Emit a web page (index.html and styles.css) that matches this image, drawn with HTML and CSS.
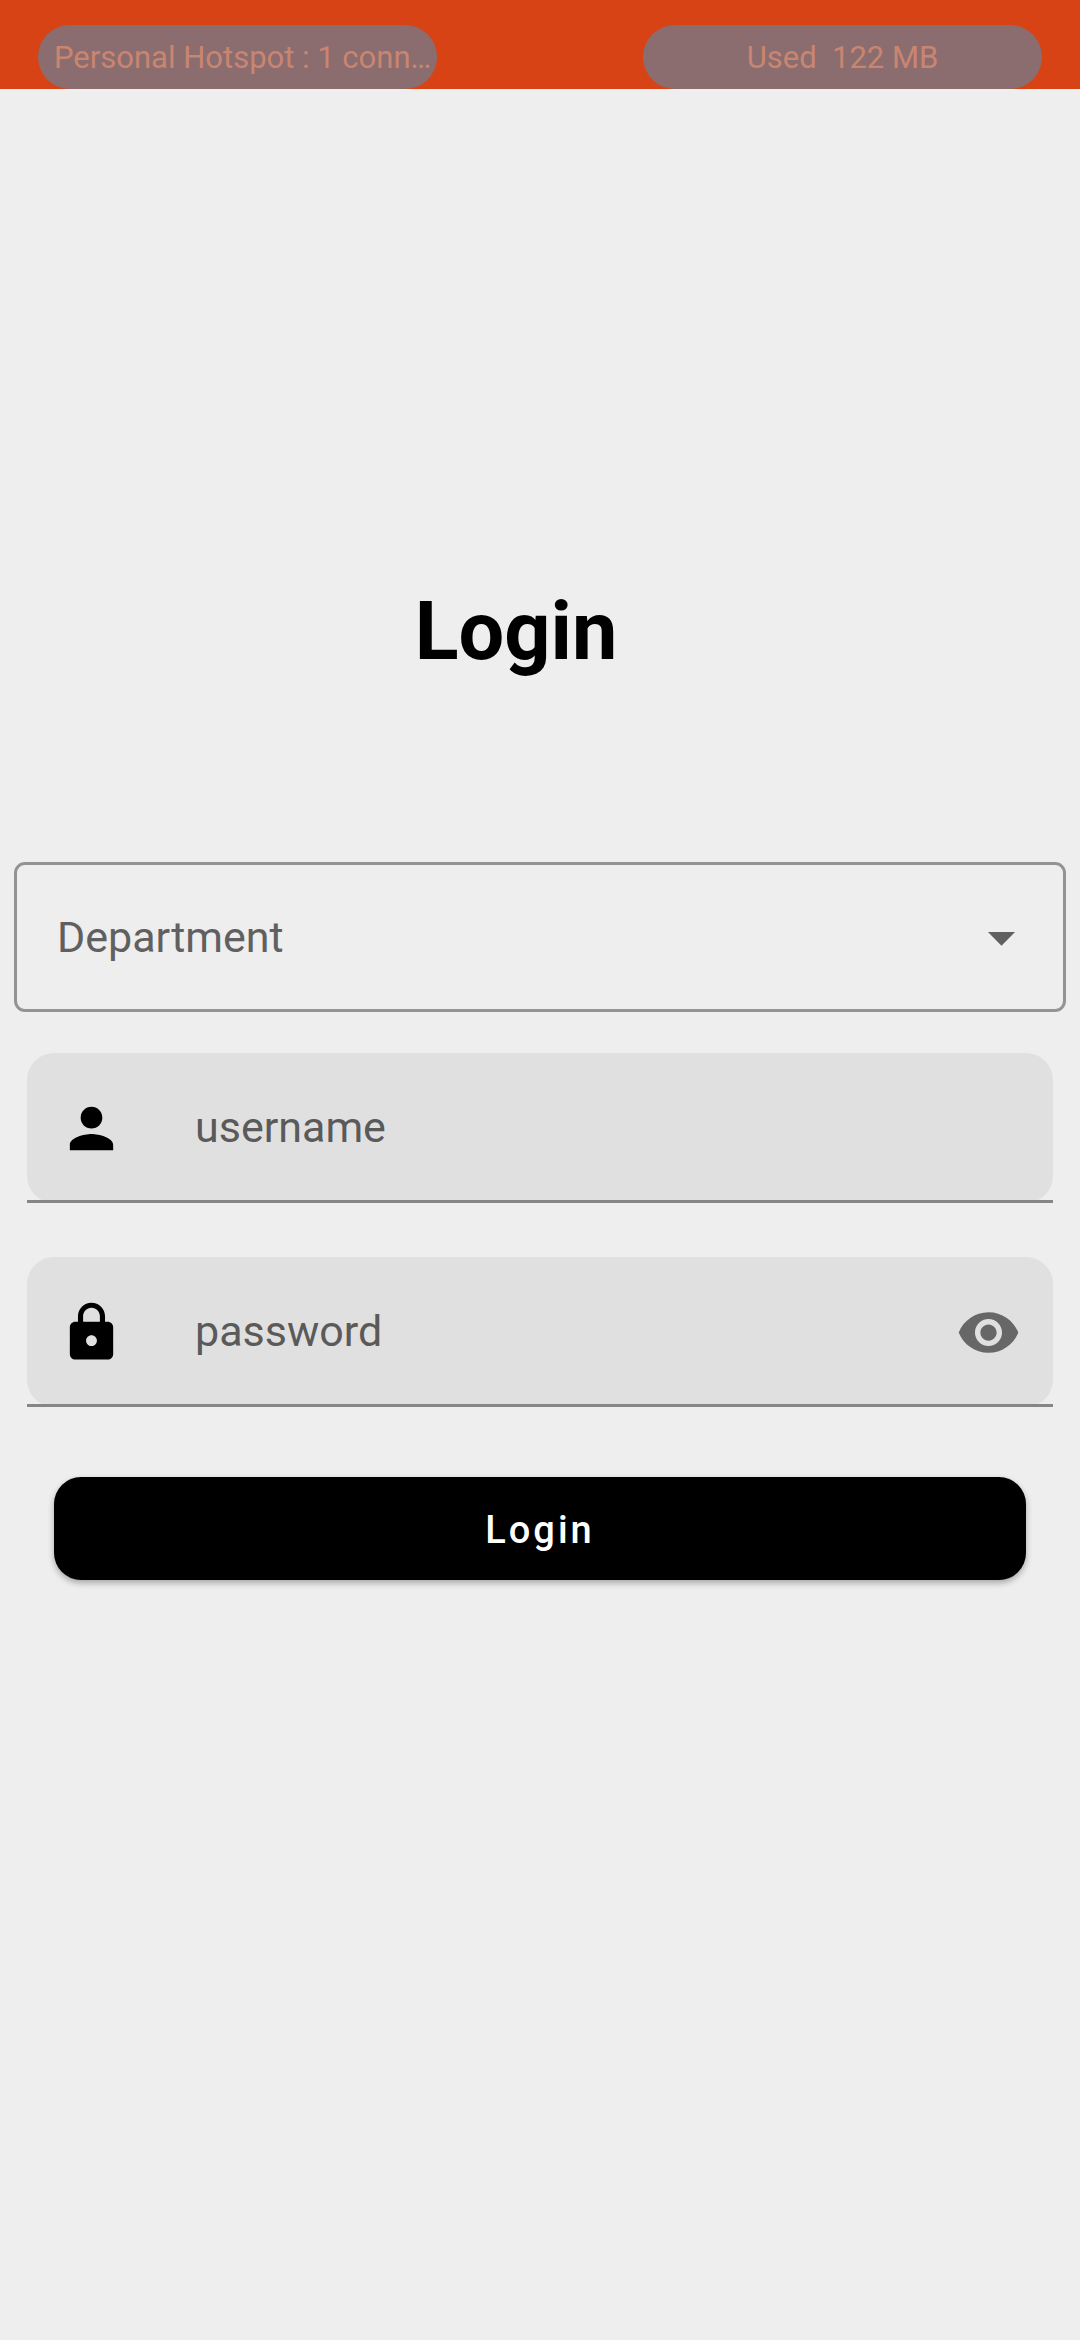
FILE: index.html
```html
<!DOCTYPE html>
<html lang="en">
<head>
  <meta charset="utf-8">
  <meta name="viewport" content="width=device-width, initial-scale=1">
  <title>Login</title>
  <link rel="stylesheet" href="styles.css">
</head>
<body>
  <header class="status-bar">
    <span class="status-pill status-pill-start">Personal Hotspot : 1 conn…</span>
    <span class="status-pill">Used  122 MB</span>
  </header>

  <main class="screen">
    <h1 class="title">Login</h1>

    <form class="login-form">
      <div class="dropdown">
        <select class="dropdown-select" aria-label="Department">
          <option>Department</option>
        </select>
        <svg class="icon dropdown-arrow" viewBox="0 0 24 24" aria-hidden="true"><path d="M7 10l5 5 5-5z"/></svg>
      </div>

      <div class="field">
        <label class="field-icon" for="username">
          <svg class="icon" viewBox="0 0 24 24" role="img" aria-label="Username"><path d="M12 12c2.21 0 4-1.79 4-4s-1.790-4-4-4-4 1.790-4 4 1.790 4 4 4zm0 2c-2.670 0-8 1.340-8 4v2h16v-2c0-2.660-5.330-4-8-4z"/></svg>
        </label>
        <input class="field-input" id="username" type="text" placeholder="username">
      </div>

      <div class="field">
        <label class="field-icon" for="password">
          <svg class="icon" viewBox="0 0 24 24" role="img" aria-label="Password"><path d="M18 8h-1V6c0-2.760-2.240-5-5-5S7 3.240 7 6v2H6c-1.100 0-2 .9-2 2v10c0 1.100.9 2 2 2h12c1.100 0 2-.9 2-2V10c0-1.100-.9-2-2-2zm-6 9c-1.100 0-2-.9-2-2s.9-2 2-2 2 .9 2 2-.9 2-2 2zm3.100-9H8.900V6c0-1.710 1.390-3.100 3.100-3.100s3.100 1.390 3.100 3.100v2z"/></svg>
        </label>
        <input class="field-input" id="password" type="password" placeholder="password">
        <button class="reveal" type="button" aria-label="Show password">
          <svg class="icon" viewBox="0 0 24 24" aria-hidden="true"><path d="M12 4.500C7 4.500 2.730 7.610 1 12c1.730 4.390 6 7.500 11 7.500s9.270-3.110 11-7.500c-1.730-4.390-6-7.500-11-7.500zM12 17c-2.760 0-5-2.240-5-5s2.240-5 5-5 5 2.240 5 5-2.240 5-5 5zm0-8c-1.660 0-3 1.340-3 3s1.340 3 3 3 3-1.340 3-3-1.340-3-3-3z"/></svg>
        </button>
      </div>

      <button class="submit" type="button">Login</button>
    </form>
  </main>
</body>
</html>
```
FILE: styles.css
```css
* {
  box-sizing: border-box;
}

body {
  margin: 0;
  min-height: 100vh;
  background: #eeeeee;
  color: #000000;
  font-family: Roboto, "Liberation Sans", sans-serif;
}

/* Status bar */
.status-bar {
  display: flex;
  justify-content: space-between;
  padding: 25px 38px 0;
  background: #d84315;
}

.status-pill {
  flex: 0 1 399px;
  height: 64px;
  border-radius: 32px;
  background: #8b6d6f;
  color: #c98570;
  font-size: 31px;
  line-height: 66px;
  text-align: center;
  white-space: pre;
}

.status-pill-start {
  padding-left: 16px;
  text-align: left;
}

/* Login screen */
.title {
  margin: 0;
  padding: 480px 48px 168px 0;
  font-size: 81px;
  font-weight: 700;
  line-height: 125px;
  text-align: center;
}

.login-form {
  display: flex;
  flex-direction: column;
}

.icon {
  display: block;
  width: 65px;
  height: 65px;
  fill: currentColor;
}

.dropdown {
  position: relative;
  margin: 0 14px 41px;
}

.dropdown-select {
  display: block;
  width: 100%;
  height: 150px;
  padding: 0 120px 0 40px;
  border: 3px solid #939393;
  border-radius: 11px;
  appearance: none;
  background: transparent;
  color: #606060;
  font-family: inherit;
  font-size: 43px;
}

.dropdown-arrow {
  position: absolute;
  top: 43px;
  right: 32px;
  color: #606060;
  pointer-events: none;
}

.field {
  position: relative;
  display: flex;
  align-items: center;
  height: 150px;
  margin: 0 27px 54px;
  padding: 0 32px;
  border-radius: 27px;
  background: #e0e0e0;
}

/* Indicator line runs the full width, past the rounded corners */
.field::after {
  content: "";
  position: absolute;
  right: 0;
  bottom: 0;
  left: 0;
  height: 3px;
  background: #868686;
}

.field-input {
  flex: 1;
  min-width: 0;
  height: 100%;
  margin-left: 71px;
  padding: 0 0 3px;
  border: 0;
  outline: 0;
  background: transparent;
  color: #000000;
  font-family: inherit;
  font-size: 43px;
}

.field-input::placeholder {
  color: #5a5a5a;
  opacity: 1;
}

.reveal {
  padding: 0;
  border: 0;
  background: transparent;
  color: #676767;
}

.submit {
  height: 103px;
  margin: 16px 54px 0;
  padding: 2px 0 0;
  border: 0;
  border-radius: 27px;
  background: #000000;
  box-shadow: 0 3px 6px rgba(0, 0, 0, 0.3);
  color: #ffffff;
  font-family: inherit;
  font-size: 38px;
  font-weight: 500;
  letter-spacing: 3px;
}
```
